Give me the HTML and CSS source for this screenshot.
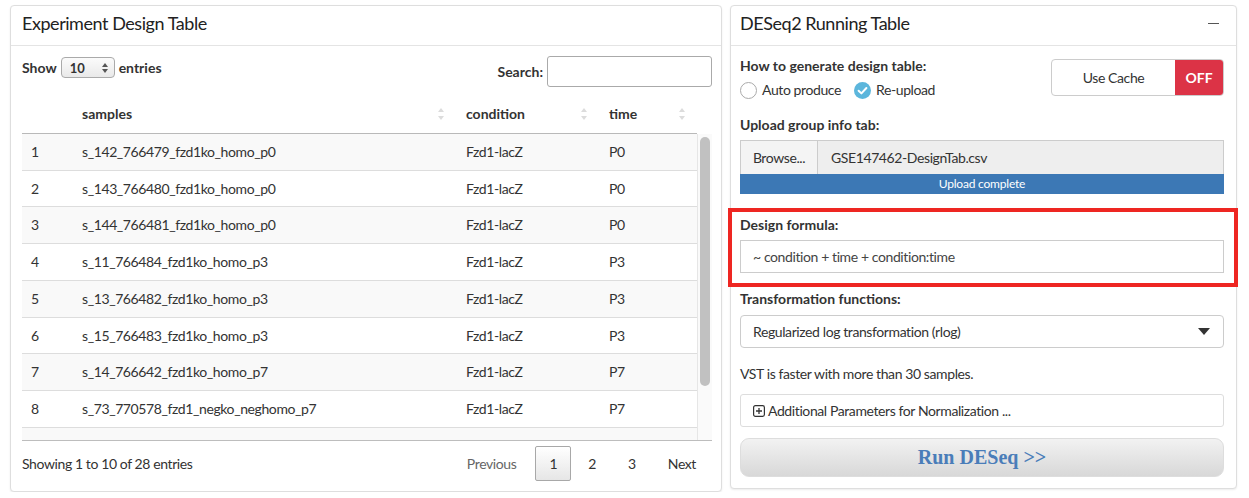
FILE: index.html
```html
<!DOCTYPE html>
<html>
<head>
<meta charset="utf-8">
<link rel="stylesheet" href="styles.css">
</head>
<body>
<div class="page">
  <section class="box box-left">
    <div class="box-header"><h3 class="box-title">Experiment Design Table</h3></div>
    <div class="box-body left-body">
      <div class="dt-top">
        <div class="dt-length">
          <span class="bold">Show</span>
          <span class="len-select">10
            <svg class="updown" width="8" height="12" viewBox="0 0 8 12"><path d="M4 1 L7 5 H1 Z M4 11 L7 7 H1 Z" fill="#555"/></svg>
          </span>
          <span class="bold">entries</span>
        </div>
        <div class="dt-search">
          <span class="bold">Search:</span>
          <span class="search-input"></span>
        </div>
      </div>
      <table class="dt-head">
        <colgroup><col class="c1"><col class="c2"><col class="c3"><col class="c4"></colgroup>
        <tr>
          <th></th>
          <th>samples<svg class="sort" width="8" height="14" viewBox="0 0 8 14"><path d="M4 1 L7 5 H1 Z M4 13 L7 9 H1 Z" fill="#dcdcdc"/></svg></th>
          <th>condition<svg class="sort" width="8" height="14" viewBox="0 0 8 14"><path d="M4 1 L7 5 H1 Z M4 13 L7 9 H1 Z" fill="#dcdcdc"/></svg></th>
          <th>time<svg class="sort" width="8" height="14" viewBox="0 0 8 14"><path d="M4 1 L7 5 H1 Z M4 13 L7 9 H1 Z" fill="#dcdcdc"/></svg></th>
        </tr>
      </table>
      <div class="dt-scroll">
        <div class="dt-rows">
          <table class="dt-body">
            <colgroup><col class="c1"><col class="c2"><col class="c3"><col class="c4"></colgroup>
            <tr class="odd"><td>1</td><td>s_142_766479_fzd1ko_homo_p0</td><td>Fzd1-lacZ</td><td>P0</td></tr>
            <tr><td>2</td><td>s_143_766480_fzd1ko_homo_p0</td><td>Fzd1-lacZ</td><td>P0</td></tr>
            <tr class="odd"><td>3</td><td>s_144_766481_fzd1ko_homo_p0</td><td>Fzd1-lacZ</td><td>P0</td></tr>
            <tr><td>4</td><td>s_11_766484_fzd1ko_homo_p3</td><td>Fzd1-lacZ</td><td>P3</td></tr>
            <tr class="odd"><td>5</td><td>s_13_766482_fzd1ko_homo_p3</td><td>Fzd1-lacZ</td><td>P3</td></tr>
            <tr><td>6</td><td>s_15_766483_fzd1ko_homo_p3</td><td>Fzd1-lacZ</td><td>P3</td></tr>
            <tr class="odd"><td>7</td><td>s_14_766642_fzd1ko_homo_p7</td><td>Fzd1-lacZ</td><td>P7</td></tr>
            <tr><td>8</td><td>s_73_770578_fzd1_negko_neghomo_p7</td><td>Fzd1-lacZ</td><td>P7</td></tr>
            <tr class="odd filler"><td></td><td></td><td></td><td></td></tr>
          </table>
        </div>
        <div class="scroll-track"><div class="scroll-thumb"></div></div>
      </div>
      <div class="dt-foot">
        <div class="dt-info">Showing 1 to 10 of 28 entries</div>
        <div class="pager">
          <span class="pg pg-muted">Previous</span>
          <span class="pg pg-current">1</span>
          <span class="pg">2</span>
          <span class="pg">3</span>
          <span class="pg">Next</span>
        </div>
      </div>
    </div>
  </section>

  <section class="box box-right">
    <div class="box-header header-right">
      <h3 class="box-title">DESeq2 Running Table</h3>
      <span class="minus"></span>
    </div>
    <div class="box-body right-body">
      <div class="gen-row">
        <div class="gen-left">
          <div class="label">How to generate design table:</div>
          <div class="radios">
            <span class="radio"><span class="radio-circle"></span>Auto produce</span>
            <span class="radio"><svg class="radio-check" width="17" height="17" viewBox="0 0 17 17"><circle cx="8.5" cy="8.5" r="8.5" fill="#5cb6dc"/><path d="M4.6 8.7 L7.4 11.4 L12.4 6" stroke="#fff" stroke-width="2" fill="none" stroke-linecap="round" stroke-linejoin="round"/></svg>Re-upload</span>
          </div>
        </div>
        <div class="toggle">
          <span class="toggle-label">Use Cache</span>
          <span class="toggle-off">OFF</span>
        </div>
      </div>

      <div class="label upload-label">Upload group info tab:</div>
      <div class="file-input">
        <span class="browse">Browse...</span>
        <span class="file-name">GSE147462-DesignTab.csv</span>
      </div>
      <div class="progress">Upload complete</div>

      <div class="formula">
        <div class="label">Design formula:</div>
        <div class="text-input">~ condition + time + condition:time</div>
      </div>

      <div class="label trans-label">Transformation functions:</div>
      <div class="select">
        <span>Regularized log transformation (rlog)</span>
        <svg width="12" height="7" viewBox="0 0 12 7"><path d="M0 0 H12 L6 7 Z" fill="#333"/></svg>
      </div>

      <div class="help">VST is faster with more than 30 samples.</div>

      <div class="collapse">
        <svg class="plus" width="12" height="12" viewBox="0 0 12 12"><rect x="0.6" y="0.6" width="10.8" height="10.8" rx="1.8" fill="none" stroke="#333" stroke-width="1.2"/><path d="M6 3 V9 M3 6 H9" stroke="#333" stroke-width="1.3"/></svg>
        <span>Additional Parameters for Normalization ...</span>
      </div>

      <div class="run-btn">Run DESeq &gt;&gt;</div>
    </div>
  </section>
</div>
</body>
</html>
```

FILE: styles.css
```css
* { box-sizing: border-box; }
html, body { margin: 0; padding: 0; background: #fff; }
body {
  font-family: "Lato", "Source Sans Pro", sans-serif;
  font-size: 14px;
  color: #333;
  letter-spacing: -0.4px;
}
.page {
  display: flex;
  align-items: flex-start;
  gap: 8px;
  padding: 5px 12px 0 10px;
}
.box {
  border: 1px solid #dedede;
  border-radius: 4px;
  background: #fff;
  box-shadow: 0 1px 2px rgba(0,0,0,0.08);
}
.box-left { width: 712px; }
.box-right { width: 507px; }
.box-header {
  height: 40px;
  border-bottom: 1px solid #e4e4e4;
  display: flex;
  align-items: center;
  padding: 0 11px 5px;
}
.header-right { padding: 0 9px 5px; justify-content: space-between; }
.box-title {
  margin: 0;
  font-size: 18px;
  font-weight: 400;
  color: #222;
  letter-spacing: -0.45px;
}
.minus {
  width: 11px;
  height: 1.5px;
  background: #555;
  margin-right: 8px;
  margin-top: 1px;
}
.bold, .label, th, .toggle-off, .len-select { font-weight: 700; letter-spacing: 0; }

/* ---- left table ---- */
.left-body { padding: 10px 9px 10px 11px; }
.dt-top {
  display: flex;
  justify-content: space-between;
  align-items: flex-start;
  height: 31px;
}
.dt-length {
  display: flex;
  align-items: center;
  gap: 4px;
  margin-top: 1px;
  height: 21px;
}
.len-select {
  width: 54px;
  height: 21px;
  border: 1px solid #aaa;
  border-radius: 4px;
  background: linear-gradient(#fbfbfb, #e9e9e9);
  display: flex;
  align-items: center;
  justify-content: space-between;
  padding: 0 5px 0 8px;
  font-size: 13px;
}
.dt-search { display: flex; align-items: center; gap: 4px; }
.search-input {
  width: 165px;
  height: 31px;
  border: 1px solid #aaa;
  border-radius: 3px;
}
.dt-head, .dt-body {
  border-collapse: collapse;
  table-layout: fixed;
  width: 675px;
}
.c1 { width: 50px; }
.c2 { width: 384px; }
.c3 { width: 143px; }
.c4 { width: 98px; }
.dt-head th {
  text-align: left;
  padding: 16px 10px 8px;
  line-height: 22px;
  border-bottom: 1px solid #b9b9b9;
  position: relative;
}
.sort {
  position: absolute;
  right: 11px;
  top: 20px;
}
.dt-scroll {
  display: flex;
  width: 690px;
  height: 307px;
  border-bottom: 1px solid #bdbdbd;
}
.dt-rows {
  width: 675px;
  height: 306px;
  overflow: hidden;
}
.scroll-track {
  width: 15px;
  height: 306px;
  background: #fafafa;
  border-left: 1px solid #e6e6e6;
  padding: 3px 2px 0 2px;
}
.scroll-thumb {
  height: 249px;
  background: #c1c1c1;
  border-radius: 5px;
}
.dt-body td {
  padding: 8px 10px;
  line-height: 19.7px;
  border-top: 1px solid #ddd;
  white-space: nowrap;
  overflow: hidden;
}
.dt-body tr:first-child td { border-top: none; }
.dt-body tr.odd td { background: #f9f9f9; }
.dt-body td:first-child { padding-left: 9px; }
.dt-body tr.filler td { height: 37px; }
.dt-foot {
  display: flex;
  justify-content: space-between;
  align-items: center;
  padding-top: 5px;
}
.pager { display: flex; align-items: center; margin-right: 0; }
.pg {
  padding: 0 15px;
  height: 35px;
  line-height: 33px;
  border: 1px solid transparent;
  color: #333;
}
.pg-muted { color: #666; margin-right: 1px; padding-right: 17px; }
.pg-current {
  width: 36px;
  padding: 0;
  text-align: center;
  border: 1px solid #a8a8a8;
  border-radius: 2px;
  background: linear-gradient(#fff, #e6e6e6);
  margin-right: 1px;
}

/* ---- right form ---- */
.right-body { padding: 10px 12px 11px 9px; }
.label { line-height: 20px; }
.gen-row {
  display: flex;
  justify-content: space-between;
  align-items: flex-start;
}
.radios { display: flex; gap: 13px; margin-top: 4px; line-height: 20px; }
.radio { display: flex; align-items: center; gap: 5px; }
.radio-circle {
  width: 17px; height: 17px;
  border: 1px solid #aaa;
  border-radius: 50%;
  background: #fff;
}
.toggle {
  margin-top: 3px;
  width: 173px;
  height: 37px;
  border: 1px solid #ccc;
  border-radius: 4px;
  display: flex;
  overflow: hidden;
}
.toggle-label {
  flex: 1;
  display: flex;
  align-items: center;
  justify-content: center;
}
.toggle-off {
  width: 48px;
  background: #dc3346;
  color: #fff;
  display: flex;
  align-items: center;
  justify-content: center;
}
.upload-label { margin-top: 15px; }
.file-input {
  margin-top: 5px;
  display: flex;
  height: 34px;
  border: 1px solid #ccc;
  border-bottom: none;
}
.browse {
  width: 77px;
  background: #f4f4f4;
  border-right: 1px solid #ccc;
  display: flex;
  align-items: center;
  justify-content: center;
}
.file-name {
  flex: 1;
  background: #eee;
  display: flex;
  align-items: center;
  padding-left: 13px;
}
.progress {
  height: 20px;
  background: #3c78b5;
  color: #fff;
  font-size: 12px;
  text-align: center;
  line-height: 20px;
  letter-spacing: -0.2px;
}
.formula {
  position: relative;
  margin-top: 21px;
}
.formula::after {
  content: "";
  position: absolute;
  left: -12px;
  right: -14px;
  top: -7px;
  bottom: -14px;
  border: 4px solid #ee2622;
  pointer-events: none;
}
.text-input {
  margin-top: 5px;
  height: 33px;
  border: 1px solid #ccc;
  display: flex;
  align-items: center;
  padding-left: 12px;
  color: #444;
}
.trans-label { margin-top: 16px; }
.select {
  margin-top: 6px;
  height: 33px;
  border: 1px solid #ccc;
  border-radius: 4px;
  display: flex;
  align-items: center;
  justify-content: space-between;
  padding: 0 13px 0 12px;
}
.help { margin-top: 16px; line-height: 20px; }
.collapse {
  margin-top: 10px;
  height: 33px;
  border: 1px solid #ddd;
  border-radius: 3px;
  display: flex;
  align-items: center;
  gap: 3px;
  padding-left: 12px;
}
.run-btn {
  margin-top: 11px;
  height: 39px;
  border: 1px solid #ddd;
  border-radius: 9px;
  background: linear-gradient(#f2f2f2, #d8d8d8);
  display: flex;
  align-items: center;
  justify-content: center;
  font-family: "Liberation Serif", "Times New Roman", serif;
  font-weight: 700;
  font-size: 20px;
  letter-spacing: 0;
  color: #4a7db9;
}
```
